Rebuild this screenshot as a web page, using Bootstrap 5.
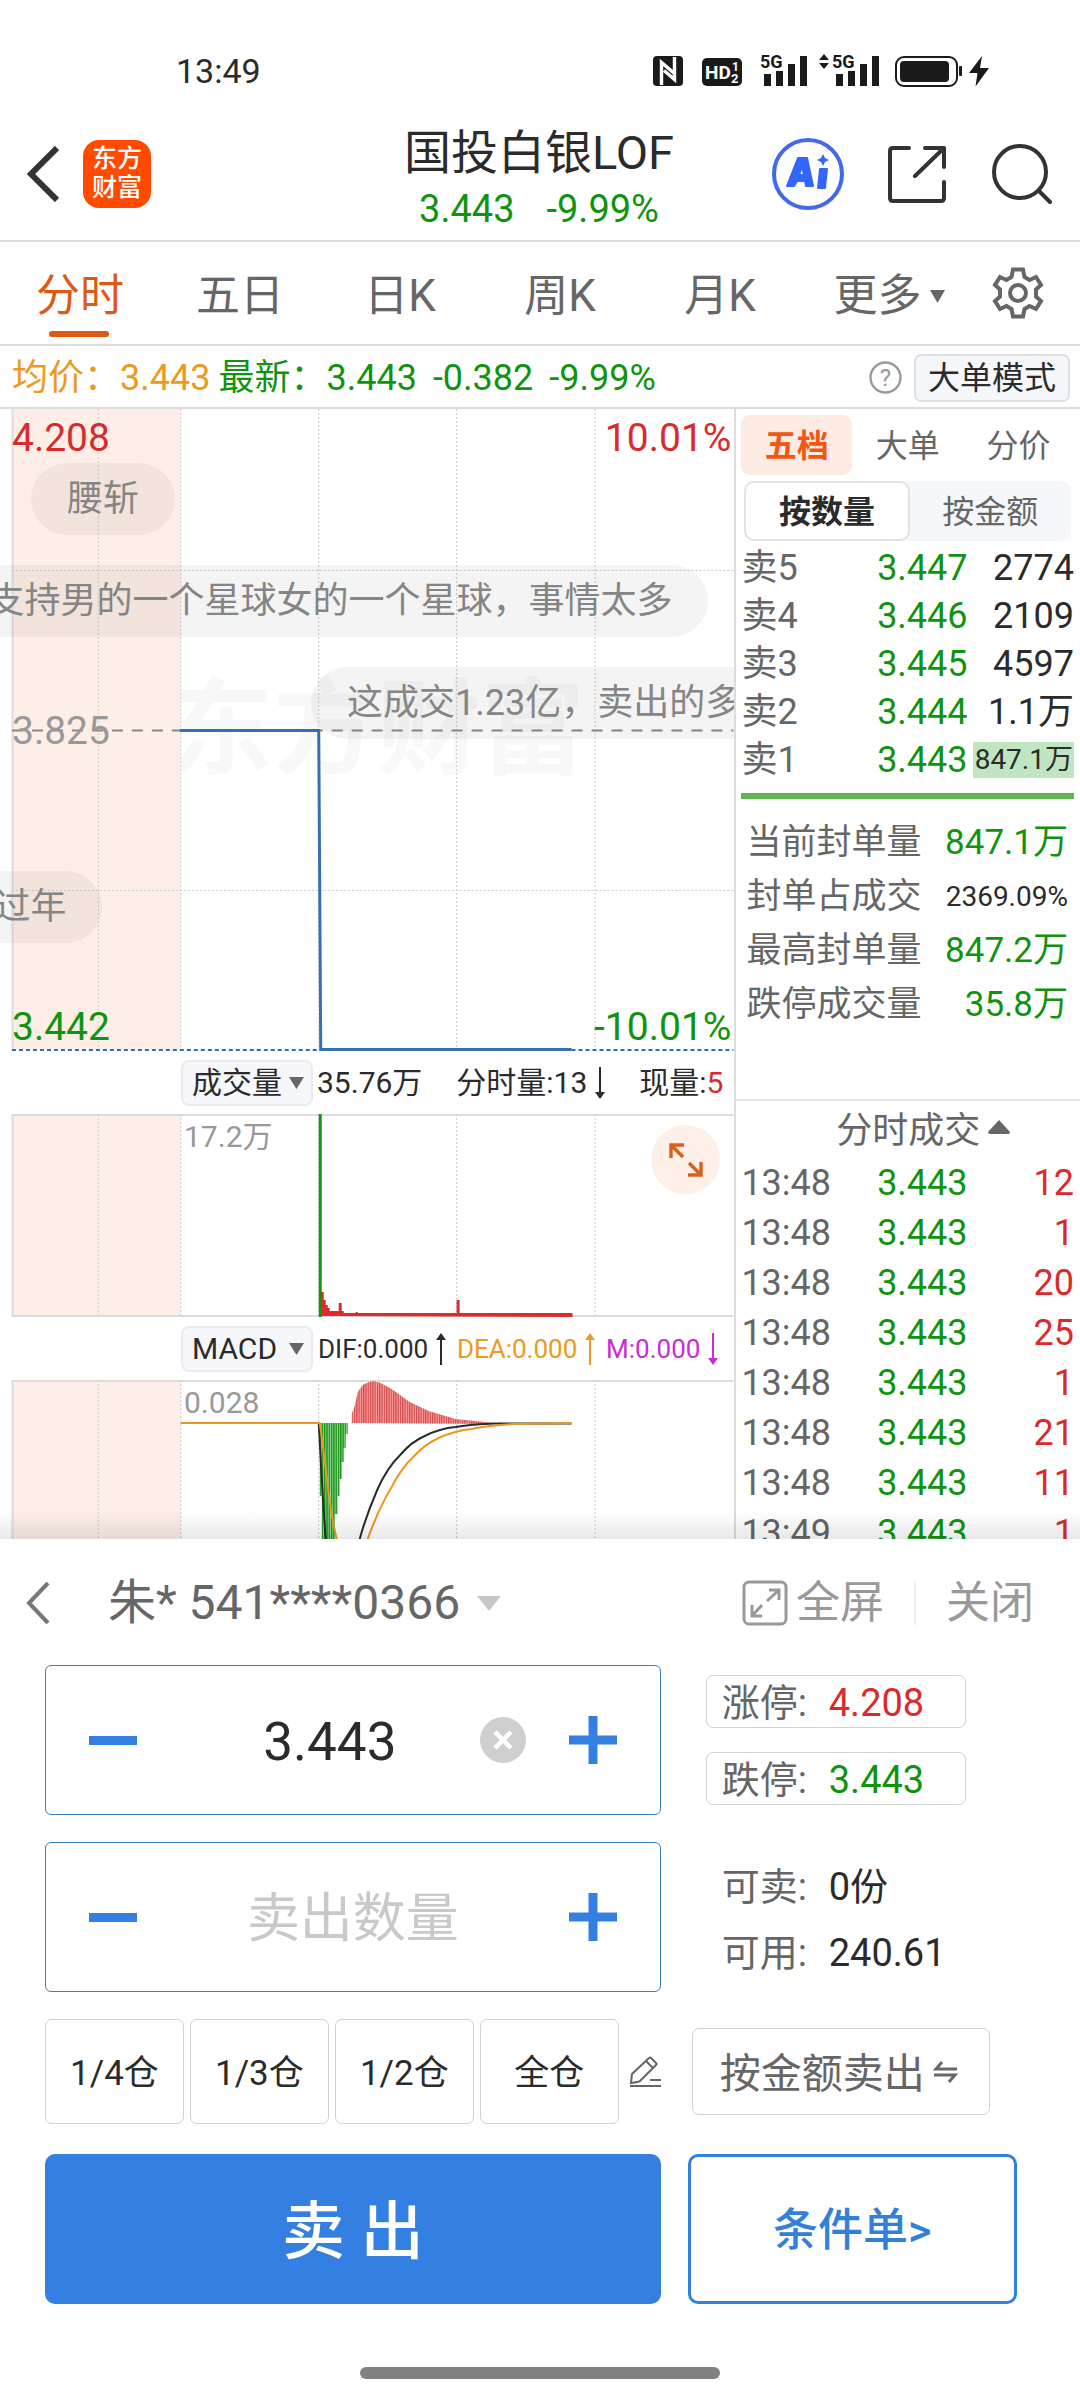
<!DOCTYPE html>
<html lang="zh-CN">
<head>
<meta charset="utf-8">
<meta name="viewport" content="width=device-width, initial-scale=1">
<title>国投白银LOF</title>
<link href="https://cdn.jsdelivr.net/npm/bootstrap@5.3.0/dist/css/bootstrap.min.css" rel="stylesheet">
<style>
:root{--up:#d92b2b;--down:#109410;--ink:#2b2b2b;--sub:#666;--hair:#dcdcdc;--blue:#3380e2;--accent:#dd5a14}
body{font-family:Roboto,"Noto Sans CJK SC",sans-serif;color:var(--ink);background:#fff;font-size:36px;line-height:48px}
svg{display:block;flex:none}
button,select,input{font-family:inherit;color:inherit}
.plain{border:0;background:none;padding:0;color:inherit;line-height:inherit}
.up{color:var(--up)}.down{color:var(--down)}.sub{color:var(--sub)}
.status{height:108px;padding:34px 90px 0 176px;font-size:34px}
.head{height:134px;border-bottom:2px solid var(--hair)}
.head-l,.head-r{flex:1}
.head-l{padding-left:26px}.head-r{padding-right:28px}
.logo-box{width:68px;height:68px;border-radius:16px;background:#ff4a00;color:#fff;font-size:25px;line-height:29px;font-weight:500;padding-top:4px;margin-left:24px}
.head-t{padding-top:14px;line-height:56px}
.name{font-size:47px;line-height:56px;font-weight:400}
.quote{font-size:38px}
.share{margin-left:43px;margin-right:46px}
.tabs{height:104px;border-bottom:2px solid var(--hair);font-size:44px}
.tabs button{width:160px;color:var(--sub);position:relative;padding-top:6px}
.tabs .more{width:178px}
.tabs .gear{width:80px;padding-top:0}
.tabs .on{color:var(--accent)}
.tabs .on::after{content:"";position:absolute;left:49px;right:51px;bottom:7px;height:6px;border-radius:3px;background:var(--accent)}
.info{height:63px;border-bottom:2px solid var(--hair);padding:2px 10px 0 12px}
.big-mode{border:2px solid #dfe1e5;background:#f6f7fa;border-radius:7px;font-size:32px;line-height:44px;padding:0 12px;margin-left:12px}
.charts{width:68%}
.side{width:32%;border-left:2px solid var(--hair);contain:size;overflow:hidden;padding:6px 6px 0 5px}
.market{position:relative}
.market::after{content:"";position:absolute;left:0;right:0;bottom:0;height:28px;background:linear-gradient(rgba(0,0,0,0),rgba(0,0,0,.09));pointer-events:none}
.plot{position:relative;overflow:hidden}
.plot>svg{width:100%;height:100%}
.p1{height:642px}.p2{height:203px}.p3{height:159px}
.tick-label{position:absolute;font-size:39px;line-height:40px}
.small-label{position:absolute;left:184px;font-size:30px;line-height:36px;color:#999}
.mark-text{position:absolute;left:169px;top:262px;font-size:104px;line-height:120px;font-weight:700;color:#f8f8f8;white-space:nowrap}
.bubble{position:absolute;height:72px;line-height:72px;border-radius:36px;padding:0 36px;background:rgba(60,60,60,.06);color:#858585;white-space:nowrap}
.ind{height:63px;padding-left:181px;font-size:30px}
.pick{position:relative;width:132px;flex:none}
.pick select{appearance:none;width:100%;height:46px;border:2px solid #e9ebef;background:#f6f7fa;border-radius:8px;padding:0 0 0 9px;font-size:30px;line-height:40px}
.pick svg{position:absolute;right:9px;top:18px;pointer-events:none}
.vol-row{padding:0 11px 0 4px}
.tiny{font-size:26px;padding:0 16px 0 5px}
.zoom-btn{position:absolute;right:14px;top:11px;width:69px;height:69px;border-radius:50%;background:#fef0e8}
.side-tabs button{height:60px;flex:1;font-size:32px;color:var(--sub);padding-top:2px}
.side-tabs .on{background:#feece4;color:#f5560f;font-weight:700;border-radius:9px}
.seg{margin:6px 3px 2px;height:60px;background:#f6f7fa;border-radius:10px}
.seg button{flex:1;font-size:32px;color:var(--sub);padding-top:2px}
.seg .on{background:#fff;border:2px solid #e3e3e3;border-radius:10px;font-weight:700;color:var(--ink)}
.ladder{width:100%;table-layout:fixed;margin:0;font-size:36px}
.ladder td{padding:2px 0 0;white-space:nowrap;text-align:right;height:48px;line-height:46px}
.ladder td:first-child{text-align:left;color:var(--sub);width:28%}
.ladder td:nth-child(2){width:40%;color:var(--down)}
.ladder.ticks td{height:50px}
.sealed{display:inline-block;background:#c0e6c1;font-size:28px;line-height:36px;padding:0 1px 0 2px;margin-bottom:4px;vertical-align:middle}
.ratio{height:6px;background:#62b651;margin:10px 0 15px}
.stat{height:54px;padding:4px 6px 0 5px;font-size:35px;white-space:nowrap}
.stat .narrow{font-size:28px}
.ticks-h{margin:69px -6px 0 -5px;border-top:2px solid #e6e6e6;height:58px;color:var(--sub);padding:4px 0 0 30px}
.acct{height:126px;padding:2px 46px 0 26px;font-size:44px}
.acct label{padding-left:58px;gap:16px}
.acct select{appearance:none;border:0;background:none;padding:0;font-size:48px;line-height:58px;color:var(--sub)}
.rule{width:2px;height:44px;background:#eee;margin:0 30px}
.gray{color:#999}
.trade{padding:0 45px}
.trade-row{margin-top:27px}
.trade-end{margin-top:30px}
.tl{width:62.2%}.tr{width:37.8%}
.step{height:150px;border:1px solid #3d7fb0;border-radius:6px}
.step .pm{width:134px;flex:none}
.step input{flex:1;min-width:0;border:0;background:none;text-align:center;font-size:53px;padding:4px 0 0;outline:0}
.step input::placeholder{color:#c9c9c9;opacity:1}
.limits{padding:10px 0 0 45px}
.lim{border:1px solid #d4d4d4;border-radius:7px;width:260px;height:53px;padding:2px 0 0 15px;font-size:38px}
.avail{height:66px;padding:2px 0 0 16px;font-size:38px}
.k{width:107px;color:var(--sub);flex:none}
.quick-row{gap:6px}
.quick{flex:1;height:105px;border:1px solid #d0d0d0;border-radius:7px;font-size:35px;padding-top:4px}
.pencil{padding-left:11px}
.pad-a{padding-left:31px}.pad-b{padding-left:27px}
.by-amt{width:298px;height:87px;border:1px solid #d0d0d0;border-radius:7px;font-size:41px;color:#666;padding:4px 4px 0 0}
.sell{height:150px;border-radius:10px;background:var(--blue);color:#fff;font-size:63px;font-weight:500;padding:6px 0 0}
.sell:hover{background:var(--blue);color:#fff}
.cond{height:150px;width:329px;border:3px solid var(--blue);border-radius:10px;color:#3380d8;font-size:45px;font-weight:500;text-decoration:none;padding-top:4px}
.home{width:360px;height:12px;border-radius:6px;background:#808080;margin:63px auto 21px}
</style>
</head>
<body>
<div class="status d-flex align-items-center justify-content-between">
  <span>13:49</span>
  <svg width="340" height="40" viewBox="650 51 340 40" fill="#1a1a1a" role="img" aria-label="状态图标">
    <rect x="653" y="56" width="30" height="30" rx="4"/>
    <path d="M661.500 85V62.500L675 74M674.500 57V79.500L664 70.500" fill="none" stroke="#fff" stroke-width="3.400"/>
    <rect x="702" y="58" width="40" height="28" rx="5"/>
    <g fill="#fff" font-family="Roboto" font-weight="700"><text x="705" y="79" font-size="19">HD</text><text x="732" y="71" font-size="12">1</text><text x="731" y="83" font-size="13">2</text></g>
    <g font-family="Roboto" font-weight="700" font-size="18"><text x="760" y="68">5G</text><text x="832" y="68">5G</text></g>
    <path d="M764 74h7v12h-7zM776 71h7v15h-7zM788 64h7v22h-7zM800 56h7v30h-7zM836 74h7v12h-7zM848 71h7v15h-7zM860 64h7v22h-7zM872 56h7v30h-7zM819 60l5-6 5 6zM819 63l5 6 5-6z"/>
    <rect x="896" y="57" width="61" height="29" rx="8" fill="none" stroke="#1a1a1a" stroke-width="2"/>
    <rect x="900" y="61" width="49" height="21" rx="4"/><rect x="959" y="66" width="3" height="10" rx="1"/>
    <path d="M982 56l-13 17h8.500l-2 13.500L989 68h-9z"/>
  </svg>
</div>

<header class="head d-flex align-items-center">
  <div class="head-l d-flex align-items-center">
    <button class="plain" aria-label="返回"><svg width="33" height="56" viewBox="0 0 33 56" fill="none" stroke="#333" stroke-width="6"><path d="M31 2L5 28l26 26"/></svg></button>
    <a class="logo-box d-block text-center text-decoration-none" href="#">东方<br>财富</a>
  </div>
  <div class="head-t text-center">
    <h1 class="name m-0">国投白银LOF</h1>
    <div class="quote down d-flex justify-content-center gap-4 px-1"><span>3.443</span><span class="ps-2">-9.99%</span></div>
  </div>
  <div class="head-r d-flex align-items-center justify-content-end">
    <button class="plain" aria-label="AI"><svg width="74" height="74" viewBox="0 0 74 74"><circle cx="37" cy="37" r="34" fill="#fff" stroke="#4169e8" stroke-width="4"/><g fill="#3366ff" stroke="#3366ff" stroke-linejoin="round" stroke-width="2"><path fill-rule="evenodd" d="M27 21h9l6 28h-7l-1-5h-8l-3 5h-7zM31 29l-3 9h5z"/><path d="M49 32h7l-2 19h-7z"/></g><path d="M52 17l2 4 4 2-4 2-2 4-2-4-4-2 4-2z" fill="#3366ff"/></svg></button>
    <button class="plain share" aria-label="分享"><svg width="58" height="58" viewBox="0 0 58 58" fill="none" stroke="#333" stroke-width="4" stroke-linecap="round" stroke-linejoin="round"><path d="M21 3H5Q2 3 2 6v47q0 3 3 3h48q3 0 3-3V37M37 3h19v19M56 3L27 31"/></svg></button>
    <button class="plain" aria-label="搜索"><svg width="60" height="62" viewBox="0 0 60 62" fill="none" stroke="#333" stroke-width="4" stroke-linecap="round"><circle cx="28" cy="29" r="26"/><path d="M47 48l11 11"/></svg></button>
  </div>
</header>

<nav class="tabs d-flex">
  <button class="plain on">分时</button><button class="plain">五日</button><button class="plain">日K</button><button class="plain">周K</button><button class="plain">月K</button>
  <button class="plain more d-flex align-items-center justify-content-center gap-2">更多<svg width="15" height="13" viewBox="0 0 15 13" fill="#666"><path d="M0 0h15L7.500 13z"/></svg></button>
  <button class="plain gear d-flex align-items-center justify-content-center" aria-label="设置"><svg width="54" height="54" viewBox="0 0 54 54" fill="none" stroke="#666" stroke-width="4"><path d="M22 3.500h10l1.500 7.500 5 3 6.500-3 5 8-5 4.500v7l5 4.500-5 8-6.500-3-5 3-1.500 7.500H22L20.500 43l-5-3L9 43l-5-8 5-4.500v-7L4 19l5-8 6.500 3 5-3z"/><circle cx="27" cy="27" r="8"/></svg></button>
</nav>

<div class="info d-flex align-items-center">
  <div class="d-flex flex-grow-1 text-nowrap">
    <span style="color:#ec9a1e">均价：3.443</span>
    <span class="down ms-2">最新：3.443</span><span class="down ms-3">-0.382</span><span class="down ms-3">-9.99%</span>
  </div>
  <svg width="33" height="33" viewBox="0 0 33 33"><circle cx="16.500" cy="16.500" r="15" fill="none" stroke="#999" stroke-width="2.400"/><text x="16.500" y="25" text-anchor="middle" font-size="24" fill="#999" font-family="Roboto">?</text></svg>
  <button class="big-mode">大单模式</button>
</div>

<main class="market d-flex">
  <section class="charts">
    <div class="plot p1">
      <div class="mark-text">东方财富</div>
      <svg class="position-relative" viewBox="0 0 735 642" preserveAspectRatio="none" fill="none">
        <path d="M12 0h169v641H12z" fill="#fdeee7"/>
        <path d="M12.500 0v641" stroke="#ddd" stroke-width="2"/>
        <path d="M98.500 0v641M181 0v641M319 0v641M457 0v641M595.500 0v641M12 161.500h722M12 481.500h722" stroke="#ccc" stroke-width="1" stroke-dasharray="2 2"/>
        <path d="M12 321.500h722" stroke="#888" stroke-width="2" stroke-dasharray="11 9"/>
        <path d="M12 641h722" stroke="#2f6fb0" stroke-width="2" stroke-dasharray="4 3"/>
        <path d="M180 321.500h139l2 319h251" stroke="#3470b2" stroke-width="3"/>
      </svg>
      <span class="tick-label up" style="left:12px;top:9px">4.208</span><span class="tick-label up" style="right:3px;top:9px">10.01%</span>
      <span class="tick-label" style="left:12px;top:302px;color:#999">3.825</span>
      <span class="tick-label down" style="left:12px;top:598px">3.442</span><span class="tick-label down" style="right:3px;top:598px">-10.01%</span>
      <span class="bubble" style="left:31px;top:54px">腰斩</span>
      <span class="bubble" style="right:26px;top:156px">支持男的一个星球女的一个星球，事情太多</span>
      <span class="bubble" style="left:311px;top:258px">这成交1.23亿，卖出的多</span>
      <span class="bubble" style="right:632px;top:462px">过年</span>
    </div>
    <div class="ind d-flex align-items-center text-nowrap">
      <label class="pick"><select aria-label="指标一"><option>成交量</option></select><svg width="15" height="12" viewBox="0 0 15 12" fill="#666"><path d="M0 0h15L7.500 12z"/></svg></label>
      <div class="vol-row d-flex flex-grow-1 justify-content-between"><span>35.76万</span><span class="d-flex align-items-center gap-2">分时量:13<svg width="10" height="32" viewBox="0 0 10 32" fill="#2b2b2b"><path d="M4 0h2v25h4l-5 7-5-7h4z"/></svg></span><span>现量:<span class="up">5</span></span></div>
    </div>
    <div class="plot p2">
      <svg viewBox="0 0 735 203" preserveAspectRatio="none" fill="none">
        <path d="M12 0h169v202H12z" fill="#fdeee7"/>
        <path d="M734 1H12.500V202H734" stroke="#ddd" stroke-width="2"/>
        <path d="M98.500 0v202M181 0v202M319 0v202M457 0v202M595.500 0v202" stroke="#ccc" stroke-dasharray="2 2"/>
        <path d="M321 202V178h3v8h2v5h2v3h2v3h9v-8h3v8h2v2h12v-1h2v1h99v-13h3v13h113v4z" fill="#dd2a2a"/>
        <path d="M320.500 0v203" stroke="#109410" stroke-width="3"/>
      </svg>
      <span class="small-label" style="top:5px">17.2万</span>
      <button class="plain zoom-btn d-flex align-items-center justify-content-center" aria-label="放大"><svg width="34" height="34" viewBox="0 0 34 34" fill="none" stroke="#d8601c" stroke-width="3.400"><path d="M2 15V2h13M2 2l12 12M32 19v13H19M32 32L20 20"/></svg></button>
    </div>
    <div class="ind d-flex align-items-center text-nowrap">
      <label class="pick"><select aria-label="指标二"><option>MACD</option></select><svg width="15" height="12" viewBox="0 0 15 12" fill="#666"><path d="M0 0h15L7.500 12z"/></svg></label>
      <div class="tiny d-flex flex-grow-1 justify-content-between"><span class="d-flex align-items-center gap-2">DIF:0.000<svg width="10" height="32" viewBox="0 0 10 32" fill="#2b2b2b"><path d="M4 32h2V7h4L5 0 0 7h4z"/></svg></span><span class="d-flex align-items-center gap-2" style="color:#ec9a1e">DEA:0.000<svg width="10" height="32" viewBox="0 0 10 32" fill="#ec9a1e"><path d="M4 32h2V7h4L5 0 0 7h4z"/></svg></span><span class="d-flex align-items-center gap-2" style="color:#cb2bd6">M:0.000<svg width="10" height="32" viewBox="0 0 10 32" fill="#cb2bd6"><path d="M4 0h2v25h4l-5 7-5-7h4z"/></svg></span></div>
    </div>
    <div class="plot p3">
      <svg viewBox="0 0 735 159" preserveAspectRatio="none" fill="none">
        <defs>
          <pattern id="redBars" width="2.300" height="8" patternUnits="userSpaceOnUse"><path d="M0 0h3v8H0z" fill="#ff9c9c"/><path d="M0 0h1.200v8H0z" fill="#cf4c4c"/></pattern>
          <pattern id="greenBars" width="2.300" height="8" patternUnits="userSpaceOnUse"><path d="M0 0h3v8H0z" fill="#8fdc8f"/><path d="M0 0h1.400v8H0z" fill="#1f951f"/></pattern>
        </defs>
        <path d="M12 0h169v159H12z" fill="#fdeee7"/>
        <path d="M734 1H12.500V159" stroke="#ddd" stroke-width="2"/>
        <path d="M98.500 0v159M181 0v159M319 0v159M457 0v159M595.500 0v159" stroke="#ccc" stroke-dasharray="2 2"/>
        <path d="M352 43V34l3-8 3-14 5-7 6-3 5-1 7 2 11 6 18 13 19 9 27 8 39 4v1z" fill="url(#redBars)"/>
        <path d="M320 43v73h2v43h13v-25h3v-18h2V99h2V82h2V68h2V54h2V43z" fill="url(#greenBars)"/>
        <path d="M181 43h138C321 80 323 120 326 159M360 159C366 137 371 125 377.500 110C385 93 392 83 401 74.500C409 65 416 60 425 56C435 51 445 48 456 47C470 44 480 44 495 43.500H572" stroke="#2b2b2b" stroke-width="2"/>
        <path d="M181 43h139C326 80 329 130 337 159M368 159C376 137 384 120 392 107C399 93 407 83 415 75.500C423 67 430 62 439 58C450 53 460 50 472 49C486 46 500 44.500 514 44L572 43" stroke="#e8981f" stroke-width="2"/>
      </svg>
      <span class="small-label" style="top:5px">0.028</span>
    </div>
  </section>

  <aside class="side">
    <div class="side-tabs d-flex"><button class="plain on">五档</button><button class="plain">大单</button><button class="plain">分价</button></div>
    <div class="seg d-flex"><button class="plain on">按数量</button><button class="plain">按金额</button></div>
    <table class="ladder">
      <tr><td>卖5</td><td>3.447</td><td>2774</td></tr>
      <tr><td>卖4</td><td>3.446</td><td>2109</td></tr>
      <tr><td>卖3</td><td>3.445</td><td>4597</td></tr>
      <tr><td>卖2</td><td>3.444</td><td>1.1万</td></tr>
      <tr><td>卖1</td><td>3.443</td><td><span class="sealed">847.1万</span></td></tr>
    </table>
    <div class="ratio"></div>
    <div class="stat d-flex align-items-center justify-content-between"><span class="sub">当前封单量</span><span class="down">847.1万</span></div>
    <div class="stat d-flex align-items-center justify-content-between"><span class="sub">封单占成交</span><span class="narrow">2369.09%</span></div>
    <div class="stat d-flex align-items-center justify-content-between"><span class="sub">最高封单量</span><span class="down">847.2万</span></div>
    <div class="stat d-flex align-items-center justify-content-between"><span class="sub">跌停成交量</span><span class="down">35.8万</span></div>
    <div class="ticks-h d-flex align-items-center justify-content-center gap-2">分时成交<svg class="mb-2" width="22" height="14" viewBox="0 0 22 14" fill="#666"><path d="M11 0l11 12q0 2-2 2H2q-2 0-2-2z"/></svg></div>
    <table class="ladder ticks">
      <tr><td>13:48</td><td>3.443</td><td class="up">12</td></tr>
      <tr><td>13:48</td><td>3.443</td><td class="up">1</td></tr>
      <tr><td>13:48</td><td>3.443</td><td class="up">20</td></tr>
      <tr><td>13:48</td><td>3.443</td><td class="up">25</td></tr>
      <tr><td>13:48</td><td>3.443</td><td class="up">1</td></tr>
      <tr><td>13:48</td><td>3.443</td><td class="up">21</td></tr>
      <tr><td>13:48</td><td>3.443</td><td class="up">11</td></tr>
      <tr><td>13:49</td><td>3.443</td><td class="up">1</td></tr>
    </table>
  </aside>
</main>

<section>
  <div class="acct d-flex align-items-center">
    <button class="plain" aria-label="返回"><svg width="24" height="42" viewBox="0 0 24 42" fill="none" stroke="#777" stroke-width="4"><path d="M22 1L3 21l19 20"/></svg></button>
    <label class="d-flex align-items-center flex-grow-1"><select aria-label="账户"><option>朱* 541****0366</option></select><svg width="24" height="15" viewBox="0 0 24 15" fill="#c8c8c8"><path d="M0 0h24L12 15z"/></svg></label>
    <button class="plain gray d-flex align-items-center gap-2"><svg width="46" height="46" viewBox="0 0 46 46" fill="none" stroke="#999" stroke-width="3"><rect x="2" y="2" width="42" height="42" rx="5"/><path d="M27 10h10v10M37 10L25 21M10 25v11h10M10 36l10-11"/></svg>全屏</button>
    <span class="rule"></span>
    <button class="plain gray">关闭</button>
  </div>
  <form class="trade">
    <div class="d-flex">
      <div class="tl">
        <div class="step d-flex">
          <button type="button" class="plain pm d-flex align-items-center justify-content-center" aria-label="减价"><svg width="48" height="9"><path d="M0 0h48v9H0z" fill="#3380e2"/></svg></button>
          <input aria-label="价格" value="3.443">
          <button type="button" class="plain" aria-label="清除"><svg width="46" height="46" viewBox="0 0 46 46"><circle cx="23" cy="23" r="23" fill="#cfcfcf"/><path d="M15 15l16 16M31 15L15 31" stroke="#fff" stroke-width="4.500"/></svg></button>
          <button type="button" class="plain pm d-flex align-items-center justify-content-center" aria-label="加价"><svg width="48" height="48"><path d="M0 19.500h48v9H0zM19.500 0h9v48h-9z" fill="#3380e2"/></svg></button>
        </div>
        <div class="step trade-row d-flex">
          <button type="button" class="plain pm d-flex align-items-center justify-content-center" aria-label="减量"><svg width="48" height="9"><path d="M0 0h48v9H0z" fill="#3380e2"/></svg></button>
          <input aria-label="数量" placeholder="卖出数量">
          <button type="button" class="plain pm d-flex align-items-center justify-content-center" aria-label="加量"><svg width="48" height="48"><path d="M0 19.500h48v9H0zM19.500 0h9v48h-9z" fill="#3380e2"/></svg></button>
        </div>
      </div>
      <div class="tr limits">
        <div class="lim d-flex align-items-center"><span class="k">涨停:</span><span class="up">4.208</span></div>
        <div class="lim d-flex align-items-center mt-4"><span class="k">跌停:</span><span class="down">3.443</span></div>
        <div class="avail d-flex align-items-center mt-5"><span class="k">可卖:</span><span>0份</span></div>
        <div class="avail d-flex align-items-center"><span class="k">可用:</span><span>240.61</span></div>
      </div>
    </div>
    <div class="trade-row d-flex align-items-center">
      <div class="tl d-flex align-items-center">
        <div class="quick-row d-flex flex-grow-1">
          <button type="button" class="plain quick">1/4仓</button><button type="button" class="plain quick">1/3仓</button><button type="button" class="plain quick">1/2仓</button><button type="button" class="plain quick">全仓</button>
        </div>
        <button type="button" class="plain pencil" aria-label="编辑"><svg width="31" height="32" viewBox="0 0 31 32" fill="none" stroke="#666" stroke-width="2"><path d="M0 30h31M20 24h11M1 27l1-9L19 2q1-1 2 0l5 5q1 1 0 2L10 25q-1 1-9 2zM16 5l7 7"/></svg></button>
      </div>
      <div class="tr pad-a"><button type="button" class="plain by-amt d-flex align-items-center justify-content-center gap-2">按金额卖出<svg class="mb-1" width="25" height="24" viewBox="0 0 25 24" fill="none" stroke="#666" stroke-width="3"><path d="M24 9H3L9 2M1 15h21l-6 7"/></svg></button></div>
    </div>
    <div class="trade-end d-flex">
      <div class="tl"><button type="submit" class="btn sell w-100">卖 出</button></div>
      <div class="tr pad-b"><a href="#" class="cond d-flex align-items-center justify-content-center">条件单&gt;</a></div>
    </div>
  </form>
  <div class="home"></div>
</section>
<script src="https://cdn.jsdelivr.net/npm/bootstrap@5.3.0/dist/js/bootstrap.bundle.min.js"></script>
</body>
</html>
